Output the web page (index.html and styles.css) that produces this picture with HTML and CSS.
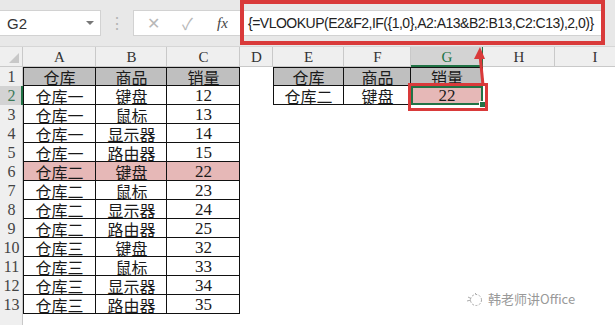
FILE: index.html
```html
<!DOCTYPE html>
<html lang="zh-CN">
<head>
    <meta charset="UTF-8">
    <title>VLOOKUP 多条件查找</title>
    <link rel="stylesheet" href="styles.css">
</head>
<body>
    <div class="toolbar">
        <div class="namebox">
            <span>G2</span>
            <span class="caret"></span>
        </div>
        <div class="grip">⋮</div>
        <div class="fbar">
            <div class="fbtns">
                <span class="btn">✕</span>
                <span class="btn">✓</span>
                <span class="fx">fx</span>
            </div>
            <div class="finput">{=VLOOKUP(E2&amp;F2,IF({1,0},A2:A13&amp;B2:B13,C2:C13),2,0)}</div>
        </div>
    </div>

    <table class="sheet">
        <colgroup>
            <col style="width:23px"><col style="width:73px"><col style="width:71px"><col style="width:73px">
            <col style="width:33px"><col style="width:71px"><col style="width:67px"><col style="width:72px">
            <col style="width:72px"><col style="width:80px">
        </colgroup>
        <thead>
            <tr>
                <th class="corner"><span class="tri"></span></th>
                <th>A</th><th>B</th><th>C</th><th>D</th><th>E</th><th>F</th>
                <th class="active">G</th><th>H</th><th>I</th>
            </tr>
        </thead>
        <tbody>
            <tr>
                <th>1</th>
                <td class="t l top hd">仓库</td><td class="t top hd">商品</td><td class="t top hd">销量</td>
                <td></td>
                <td class="t l top hd">仓库</td><td class="t top hd">商品</td><td class="t top hd">销量</td>
                <td></td><td></td>
            </tr>
            <tr>
                <th class="active">2</th>
                <td class="t l">仓库一</td><td class="t">键盘</td><td class="t num">12</td>
                <td></td>
                <td class="t l">仓库二</td><td class="t">键盘</td><td class="t num sel">22</td>
                <td></td><td></td>
            </tr>
            <tr><th>3</th><td class="t l">仓库一</td><td class="t">鼠标</td><td class="t num">13</td><td colspan="6"></td></tr>
            <tr><th>4</th><td class="t l">仓库一</td><td class="t">显示器</td><td class="t num">14</td><td colspan="6"></td></tr>
            <tr><th>5</th><td class="t l">仓库一</td><td class="t">路由器</td><td class="t num">15</td><td colspan="6"></td></tr>
            <tr><th>6</th><td class="t l pk">仓库二</td><td class="t pk">键盘</td><td class="t num pk">22</td><td colspan="6"></td></tr>
            <tr><th>7</th><td class="t l">仓库二</td><td class="t">鼠标</td><td class="t num">23</td><td colspan="6"></td></tr>
            <tr><th>8</th><td class="t l">仓库二</td><td class="t">显示器</td><td class="t num">24</td><td colspan="6"></td></tr>
            <tr><th>9</th><td class="t l">仓库二</td><td class="t">路由器</td><td class="t num">25</td><td colspan="6"></td></tr>
            <tr><th>10</th><td class="t l">仓库三</td><td class="t">键盘</td><td class="t num">32</td><td colspan="6"></td></tr>
            <tr><th>11</th><td class="t l">仓库三</td><td class="t">鼠标</td><td class="t num">33</td><td colspan="6"></td></tr>
            <tr><th>12</th><td class="t l">仓库三</td><td class="t">显示器</td><td class="t num">34</td><td colspan="6"></td></tr>
            <tr><th>13</th><td class="t l">仓库三</td><td class="t">路由器</td><td class="t num">35</td><td colspan="6"></td></tr>
            <tr><th></th><td colspan="9"></td></tr>
        </tbody>
    </table>

    <!-- red annotations -->
    <div class="mark-formula"></div>
    <div class="mark-cell"></div>
    <svg class="arrow" width="20" height="44" viewBox="0 0 20 44">
        <line x1="13" y1="40" x2="10" y2="10" stroke="#d93a3a" stroke-width="3"/>
        <polygon points="10,2 4,14 15,14" fill="#d93a3a"/>
    </svg>

    <div class="watermark">
        <svg width="18" height="16" viewBox="0 0 18 16">
            <circle cx="10" cy="9" r="5.5" fill="none" stroke="#aaa" stroke-width="1" stroke-dasharray="2 1.5"/>
            <path d="M1 10 L5 9 M2 6 L5 7.5 M9 2 L11 4" stroke="#aaa" stroke-width="1" fill="none"/>
        </svg>
        <span>韩老师讲Office</span>
    </div>
</body>
</html>
```

FILE: styles.css
```css
body {
    margin: 0;
    width: 615px;
    height: 325px;
    overflow: hidden;
    background: #fff;
    position: relative;
    font-family: "Liberation Sans", "Noto Sans CJK SC", sans-serif;
}
.toolbar {
    height: 47px;
    background: #e8e8e8;
    display: flex;
    align-items: center;
    box-sizing: border-box;
    border-bottom: 1px solid #d6d6d6;
}
.namebox {
    flex: none;
    width: 101px;
    height: 26px;
    background: #fff;
    border: 1px solid #d2d2d2;
    border-left: none;
    box-sizing: border-box;
    display: flex;
    align-items: center;
    justify-content: space-between;
    padding: 0 6px 0 7px;
    font-size: 15px;
    color: #333;
}
.caret {
    width: 0;
    height: 0;
    border-left: 4px solid transparent;
    border-right: 4px solid transparent;
    border-top: 4px solid #777;
}
.grip {
    flex: none;
    width: 32px;
    text-align: center;
    color: #b4b4b4;
    font-size: 16px;
}
.fbar {
    flex: 1;
    min-width: 0;
    display: flex;
    height: 26px;
    margin-right: 10px;
    background: #fff;
    border: 1px solid #d2d2d2;
    box-sizing: border-box;
}
.fbtns {
    flex: none;
    width: 106px;
    display: flex;
    align-items: center;
    padding-left: 13px;
    box-sizing: border-box;
}
.btn {
    color: #b8b8b8;
    font-size: 16px;
    width: 35px;
}
.fx {
    font-family: "Liberation Serif", serif;
    font-style: italic;
    font-size: 15px;
    color: #444;
}
.finput {
    flex: 1;
    min-width: 0;
    padding-left: 8px;
    font-size: 14px;
    letter-spacing: -0.5px;
    line-height: 24px;
    color: #222;
    white-space: nowrap;
    overflow: hidden;
}

.sheet {
    table-layout: fixed;
    width: 615px;
    border-collapse: separate;
    border-spacing: 0;
    font-family: "Liberation Serif", "Noto Sans CJK SC", serif;
}
.sheet thead th {
    height: 20px;
    padding: 0;
    background: #efefef;
    font-weight: normal;
    font-size: 15px;
    color: #333;
    box-shadow: inset -1px -1px 0 #c9c9c9;
}
.sheet thead th.active {
    background: #d3d3d3;
    color: #217346;
    box-shadow: inset -1px -2px 0 #217346;
}
.corner {
    position: relative;
}
.tri {
    position: absolute;
    right: 4px;
    bottom: 4px;
    width: 0;
    height: 0;
    border-left: 10px solid transparent;
    border-bottom: 10px solid #c8c8c8;
}
.sheet tbody tr {
    height: 19px;
}
.sheet tbody th {
    padding: 0;
    background: #efefef;
    font-weight: normal;
    font-size: 16px;
    color: #444;
    line-height: 18px;
    box-shadow: inset -1px 0 0 #c9c9c9;
}
.sheet tbody th.active {
    background: #d3d3d3;
    color: #3d7a5a;
    box-shadow: inset -2px 0 0 #217346;
}
.sheet td {
    padding: 0;
    font-size: 16px;
    line-height: 18px;
    text-align: center;
    color: #1a1a1a;
    font-family: "Noto Sans CJK SC", sans-serif;
}
.sheet td.num {
    font-family: "Liberation Serif", serif;
    font-size: 17px;
}
.t {
    box-shadow: inset -1px -1px 0 #111;
}
.t.l {
    box-shadow: inset -1px -1px 0 #111, inset 1px 0 0 #111;
}
.t.top {
    box-shadow: inset -1px -1px 0 #111, inset 0 1px 0 #111;
}
.t.l.top {
    box-shadow: inset -1px -1px 0 #111, inset 1px 1px 0 #111;
}
.hd {
    background: #bfbfbf;
}
.pk {
    background: #e6b8b7;
}
.sel {
    position: relative;
    background: #e6b8b7;
    box-shadow: inset 0 0 0 2px #217346;
}
.sel::after {
    content: "";
    position: absolute;
    right: -3px;
    bottom: -3px;
    width: 5px;
    height: 5px;
    background: #217346;
    border: 1px solid #fff;
}

.mark-formula {
    position: absolute;
    left: 240px;
    top: 0;
    width: 365px;
    height: 45px;
    border: 4px solid #d93a3a;
    box-sizing: border-box;
}
.mark-cell {
    position: absolute;
    left: 408px;
    top: 83px;
    width: 80px;
    height: 28px;
    border: 3px solid #d93a3a;
    box-sizing: border-box;
}
.arrow {
    position: absolute;
    left: 470px;
    top: 45px;
}
.watermark {
    position: absolute;
    left: 466px;
    top: 289px;
    display: flex;
    align-items: center;
    gap: 4px;
    color: #999;
    font-size: 13px;
    font-family: "Noto Sans CJK SC", sans-serif;
}
```
